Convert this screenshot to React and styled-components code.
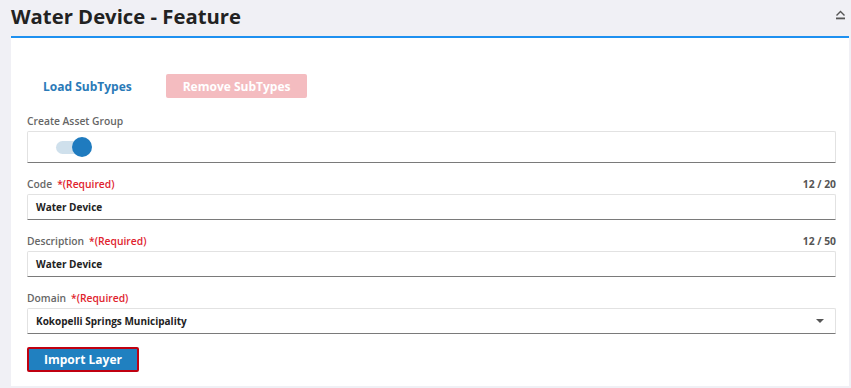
import React from "react";
import styled, { createGlobalStyle } from "styled-components";

const GlobalStyle = createGlobalStyle`
  html, body {
    margin: 0;
    padding: 0;
    background: #f0f0f5;
    font-family: "Open Sans", "Noto Sans", sans-serif;
  }
`;

const Page = styled.div`
  width: 851px;
  height: 388px;
  box-sizing: border-box;
  padding: 0 2px 2px 11px;
  display: flex;
  flex-direction: column;
  background: #f0f0f5;
`;

const Header = styled.div`
  height: 36px;
  display: flex;
  align-items: center;
  justify-content: space-between;
  border-bottom: 2px solid #1e90f0;
`;

const Title = styled.h1`
  margin: 0;
  font-size: 20.3px;
  font-weight: 700;
  color: #222;
  line-height: 1;
  padding-bottom: 3px;
`;

const CollapseButton = styled.button`
  border: none;
  background: none;
  padding: 0;
  width: 16px;
  height: 16px;
  margin-right: 1px;
  margin-bottom: 6px;
  display: flex;
  align-items: center;
  justify-content: center;
`;

const Panel = styled.div`
  flex: 1;
  background: #fff;
  padding: 36px 13px 0 16px;
`;

const ButtonRow = styled.div`
  display: flex;
  align-items: center;
  gap: 18px;
  margin-bottom: 16px;
`;

const TextButton = styled.button`
  border: none;
  background: none;
  height: 24px;
  padding: 0 16px;
  font-family: inherit;
  font-size: 12px;
  font-weight: 700;
  color: #2a7ab8;
`;

const FilledButton = styled.button`
  height: ${(p) => (p.$outlined ? "25px" : "24px")};
  padding: 0 ${(p) => (p.$outlined ? "14px" : "17px")};
  border: ${(p) => (p.$outlined ? "2px solid #c00010" : "none")};
  border-radius: 2px;
  background: ${(p) => (p.$disabled ? "#f4bcc0" : "#2080c0")};
  color: #fff;
  font-family: inherit;
  font-size: 12px;
  font-weight: 700;
  min-width: ${(p) => (p.$outlined ? "112px" : "auto")};
`;

const Field = styled.div`
  margin-bottom: ${(p) => p.$gap || "14px"};
`;

const LabelRow = styled.div`
  display: flex;
  justify-content: space-between;
  height: 14px;
  line-height: 14px;
  margin-bottom: 3px;
  font-size: 10.3px;
  font-weight: 600;
  color: #666;
`;

const Required = styled.span`
  color: #e0232e;
  margin-left: 5px;
`;

const Counter = styled.span`
  color: #555;
  font-weight: 700;
`;

const Box = styled.div`
  box-sizing: border-box;
  height: ${(p) => p.$height || "26px"};
  border: 1px solid #e2e2e2;
  border-bottom: 1px solid #7a7a7a;
  border-radius: 2px 2px 0 0;
  display: flex;
  align-items: center;
  justify-content: space-between;
  padding: 0 11px 0 ${(p) => p.$padLeft || "8px"};
  font-size: 10px;
  font-weight: 700;
  color: #222;
`;

const SwitchTrack = styled.div`
  position: relative;
  width: 34px;
  height: 13px;
  border-radius: 7px;
  background: #cfe0ec;
`;

const SwitchKnob = styled.div`
  position: absolute;
  right: -2px;
  top: -4px;
  width: 20px;
  height: 20px;
  border-radius: 50%;
  background: #1f7bbf;
`;

const Caret = styled.span`
  width: 0;
  height: 0;
  border-left: 4px solid transparent;
  border-right: 4px solid transparent;
  border-top: 4px solid #555;
`;

const App = () => (
  <>
    <GlobalStyle />
    <Page>
      <Header>
        <Title>Water Device - Feature</Title>
        <CollapseButton aria-label="collapse">
          <svg width="11" height="10" viewBox="0 0 11 10">
            <path d="M1.5 5.5 L5.5 1.5 L9.5 5.5" fill="none" stroke="#555" strokeWidth="1.4" />
            <rect x="1" y="7.5" width="9" height="1.8" fill="#555" />
          </svg>
        </CollapseButton>
      </Header>
      <Panel>
        <ButtonRow>
          <TextButton>Load SubTypes</TextButton>
          <FilledButton $disabled>Remove SubTypes</FilledButton>
        </ButtonRow>

        <Field>
          <LabelRow>
            <span>Create Asset Group</span>
          </LabelRow>
          <Box $height="32px" $padLeft="28px">
            <SwitchTrack>
              <SwitchKnob />
            </SwitchTrack>
          </Box>
        </Field>

        <Field>
          <LabelRow>
            <span>
              Code<Required>*(Required)</Required>
            </span>
            <Counter>12 / 20</Counter>
          </LabelRow>
          <Box>Water Device</Box>
        </Field>

        <Field>
          <LabelRow>
            <span>
              Description<Required>*(Required)</Required>
            </span>
            <Counter>12 / 50</Counter>
          </LabelRow>
          <Box>Water Device</Box>
        </Field>

        <Field $gap="13px">
          <LabelRow>
            <span>
              Domain<Required>*(Required)</Required>
            </span>
          </LabelRow>
          <Box>
            <span>Kokopelli Springs Municipality</span>
            <Caret />
          </Box>
        </Field>

        <FilledButton $outlined>Import Layer</FilledButton>
      </Panel>
    </Page>
  </>
);

export default App;
